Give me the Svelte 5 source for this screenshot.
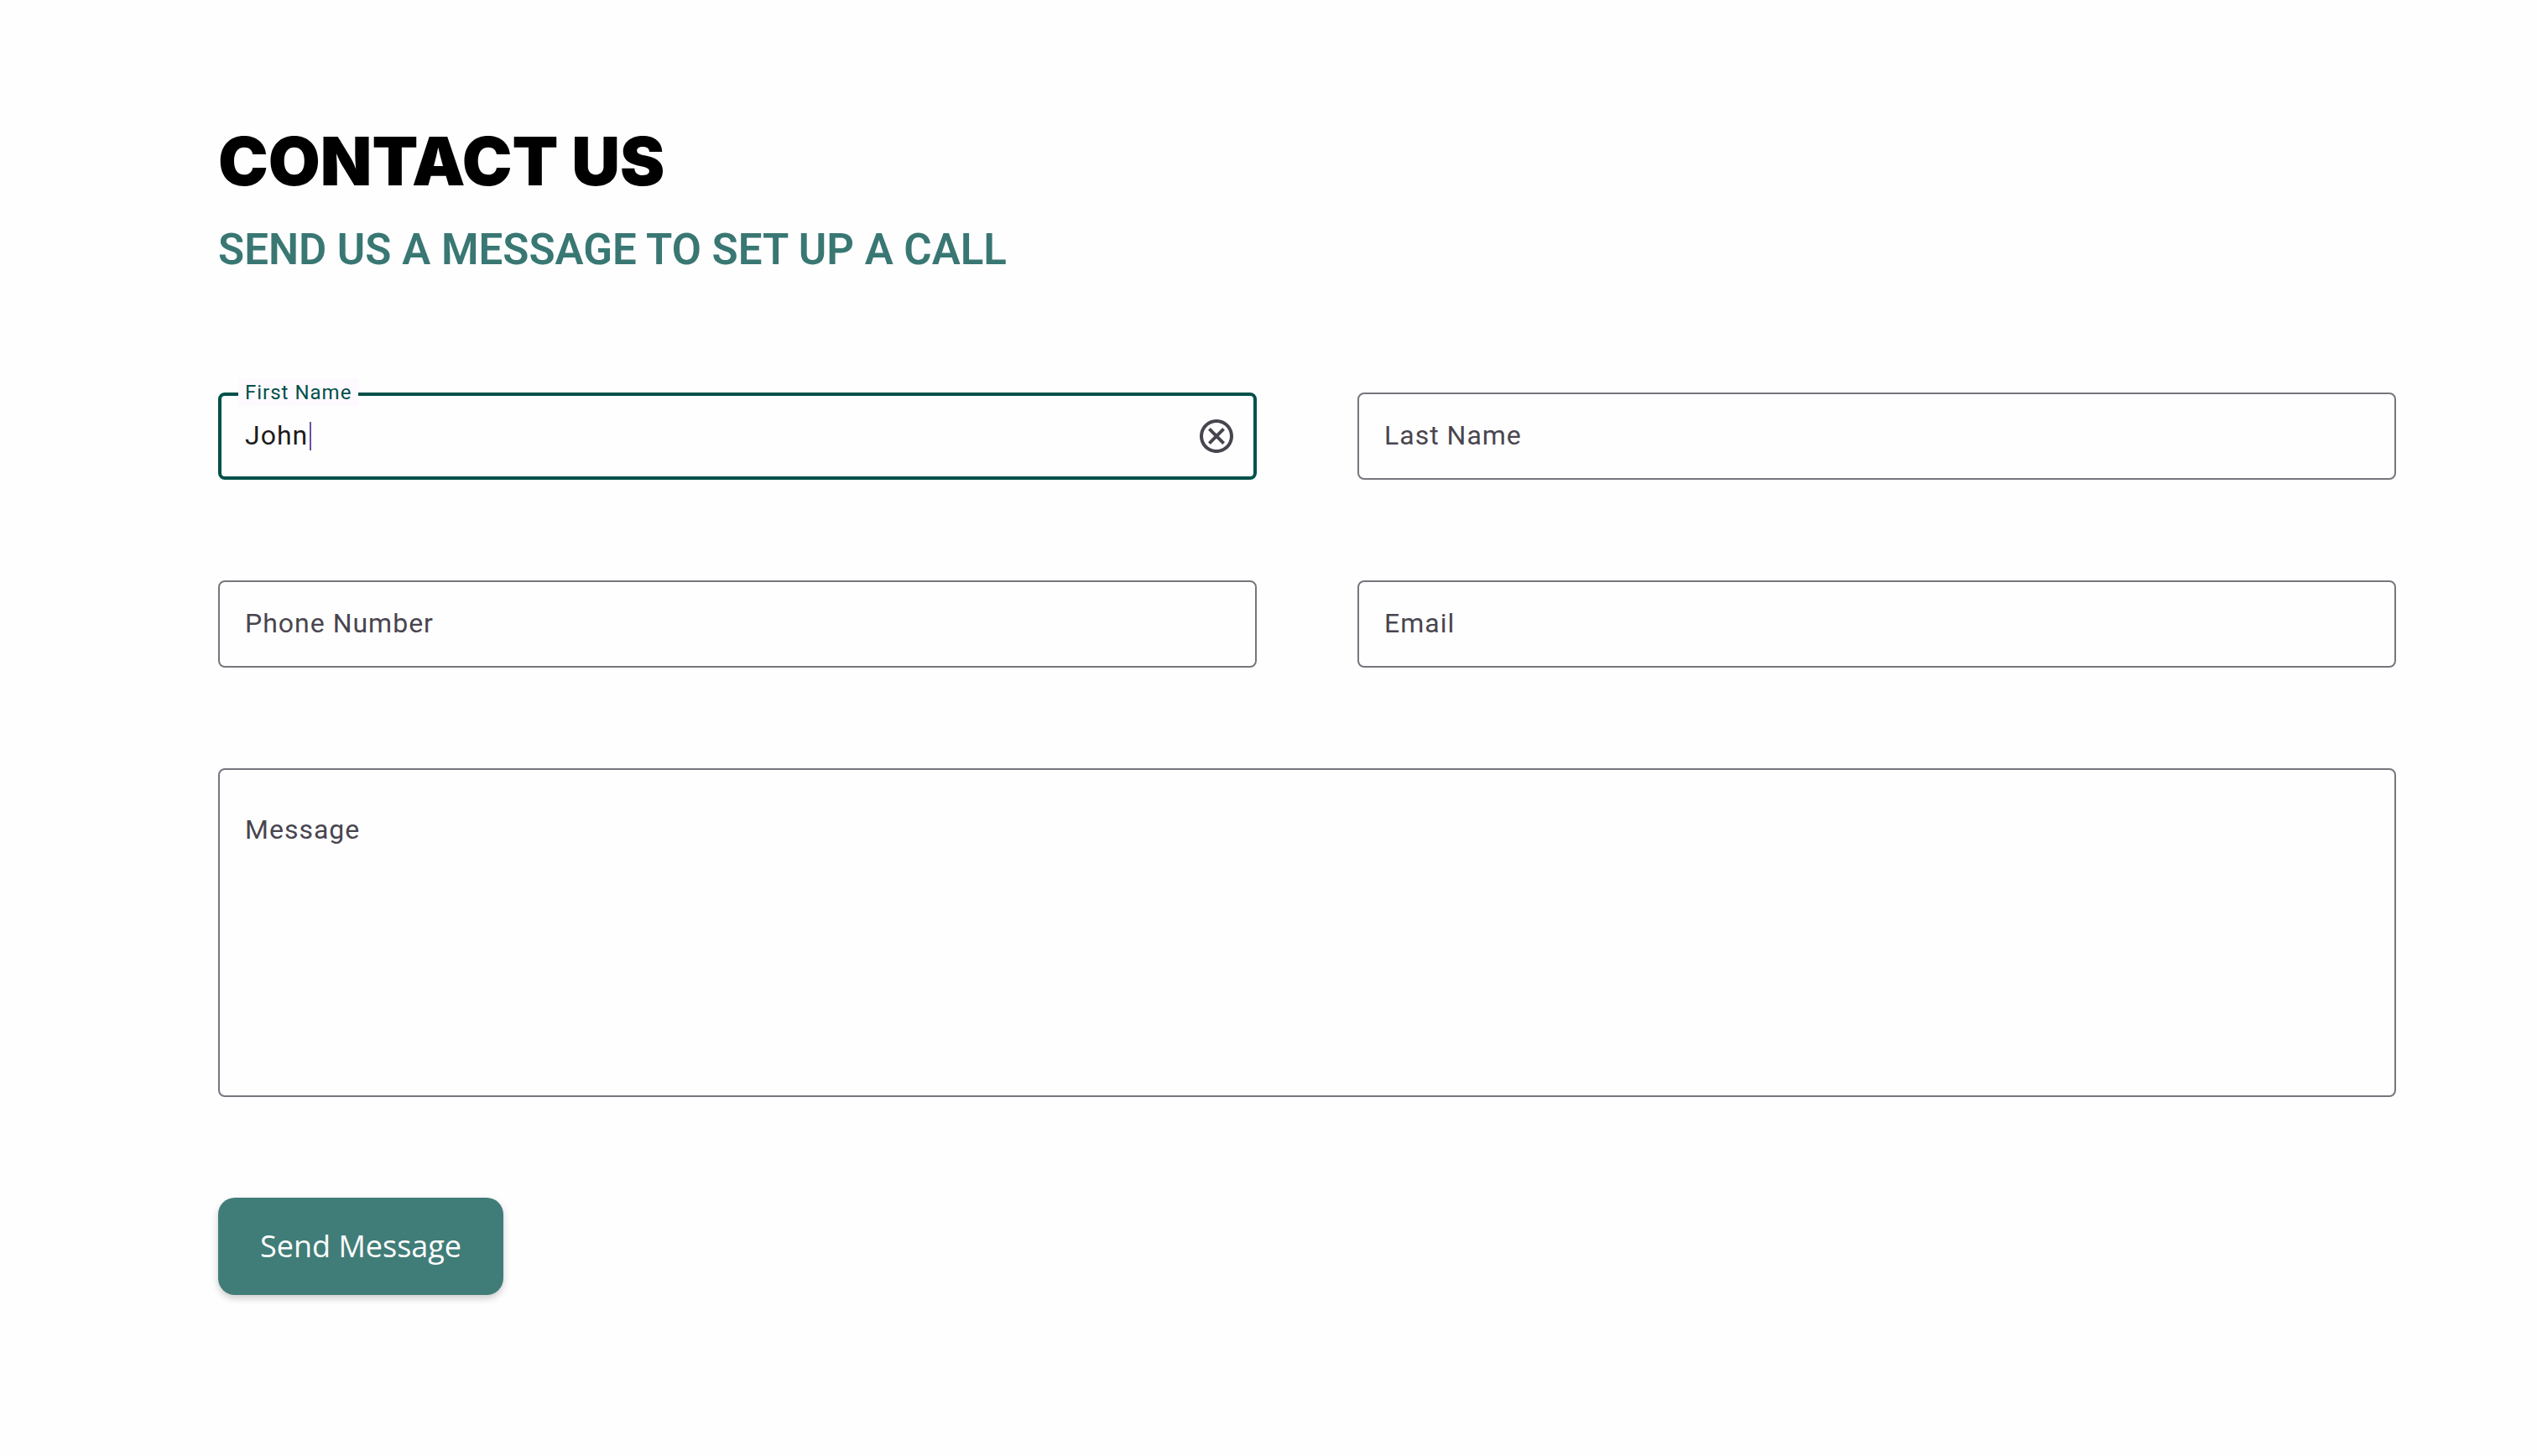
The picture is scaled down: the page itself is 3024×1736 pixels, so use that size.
<script>
  let firstName = $state('John');
  let lastName = $state('');
  let phone = $state('');
  let email = $state('');
  let message = $state('');
</script>

<main class="contact">
  <header>
    <h1>CONTACT US</h1>
    <h2>SEND US A MESSAGE TO SET UP A CALL</h2>
  </header>

  <form onsubmit={(e) => e.preventDefault()}>
    <div class="field active">
      <input id="first-name" type="text" bind:value={firstName} />
      <label for="first-name">First Name</label>
      {#if firstName === 'John'}<span class="caret"></span>{/if}
      <button class="clear" type="button" aria-label="Clear first name" onclick={() => (firstName = '')}>
        <svg viewBox="0 0 24 24" aria-hidden="true">
          <path d="M8.4 17 12 13.4 15.6 17 17 15.6 13.4 12 17 8.4 15.6 7 12 10.6 8.4 7 7 8.4 10.6 12 7 15.6ZM12 2C6.48 2 2 6.48 2 12s4.48 10 10 10 10-4.48 10-10S17.52 2 12 2Zm0 18c-4.42 0-8-3.58-8-8s3.58-8 8-8 8 3.58 8 8-3.58 8-8 8Z" />
        </svg>
      </button>
    </div>
    <div class="field" class:filled={lastName}>
      <input id="last-name" type="text" bind:value={lastName} />
      <label for="last-name">Last Name</label>
    </div>
    <div class="field" class:filled={phone}>
      <input id="phone" type="tel" bind:value={phone} />
      <label for="phone">Phone Number</label>
    </div>
    <div class="field" class:filled={email}>
      <input id="email" type="email" bind:value={email} />
      <label for="email">Email</label>
    </div>
    <div class="field wide" class:filled={message}>
      <textarea id="message" rows="6" bind:value={message}></textarea>
      <label for="message">Message</label>
    </div>
    <button class="send" type="submit">Send Message</button>
  </form>
</main>

<style>
  :global(body) {
    background: #fefefe;
  }

  .contact {
    box-sizing: border-box;
    padding: 144px 168px 144px 260px;
    font-family: Roboto, sans-serif;
  }

  header {
    display: flex;
    flex-direction: column;
    gap: 28px;
    margin-bottom: 140px;
  }

  h1,
  h2 {
    margin: 0;
  }

  h1 {
    font-family: Inter, sans-serif;
    font-size: 80px;
    line-height: 96px;
    font-weight: 900;
    color: #000;
  }

  h2 {
    font-size: 51px;
    line-height: 60px;
    font-weight: 600;
    color: #397773;
  }

  form {
    display: grid;
    grid-template-columns: 1fr 1fr;
    gap: 120px;
  }

  .field {
    position: relative;
    display: flex;
    align-items: center;
    box-sizing: border-box;
    min-height: 104px;
    border: 2px solid #79747e;
    border-radius: 8px;
  }

  .wide {
    grid-column: 1 / -1;
  }

  input,
  textarea {
    box-sizing: border-box;
    flex: 1;
    min-width: 0;
    margin: 0;
    padding: 26px 30px;
    border: 0;
    outline: 0;
    background: transparent;
    font-family: inherit;
    font-size: 32px;
    line-height: 48px;
    letter-spacing: 1px;
    color: #1d1b20;
  }

  textarea {
    padding: 50px 30px;
    resize: none;
  }

  label {
    position: absolute;
    left: 30px;
    top: 25px;
    font-size: 32px;
    line-height: 48px;
    letter-spacing: 1px;
    color: #49454f;
    cursor: text;
  }

  .wide label {
    top: 47px;
  }

  .active {
    border: 4px solid #00504a;
  }

  .active input {
    padding: 22px 28px 24px;
  }

  .active label,
  .filled label {
    left: 20px;
    top: -20px;
    padding: 0 8px;
    background: #fef9fe;
    font-size: 24px;
    line-height: 32px;
    color: #00504a;
  }

  .caret {
    position: absolute;
    left: 105px;
    top: 31px;
    width: 2px;
    height: 34px;
    background: #6750a4;
  }

  .clear {
    display: flex;
    margin: 0 20px;
    padding: 0;
    border: 0;
    background: none;
    cursor: pointer;
  }

  .clear svg {
    width: 48px;
    height: 48px;
    fill: #49454f;
  }

  .send {
    justify-self: start;
    padding: 32px 50px;
    border: 0;
    border-radius: 20px;
    background: #417d78;
    box-shadow: 0 4px 8px rgba(0, 0, 0, 0.2);
    font-family: "Open Sans", sans-serif;
    font-size: 36px;
    line-height: 52px;
    color: #fff;
    cursor: pointer;
  }
</style>
